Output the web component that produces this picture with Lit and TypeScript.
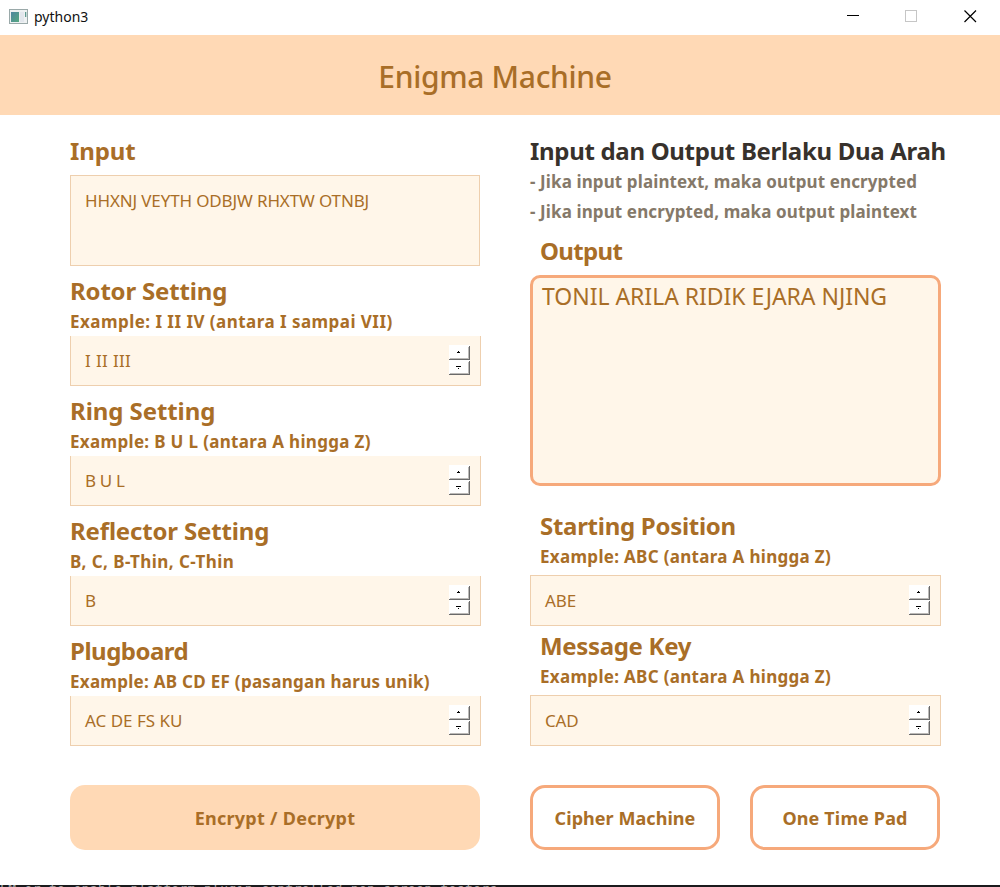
import { LitElement, html, css, svg } from "lit";
import { customElement, property } from "lit/decorators.js";
import { classMap } from "lit/directives/class-map.js";

/** Stacked pair of classic bevelled scroll buttons. */
@customElement("spin-buttons")
class SpinButtons extends LitElement {
  static styles = css`
    :host { display: block; width: 21px; height: 30px; margin-bottom: 2px; }
    svg { display: block; }
  `;

  private key(y: number, arrow: unknown) {
    return svg`<g transform="translate(0 ${y})">
      <rect width="21" height="15" fill="#fff"/>
      <path d="M0 14.5H21M20.5 1V15" stroke="#6a6a6a" fill="none"/>
      <path d="M1 13.5H20M19.5 2V14" stroke="#bcbab7" fill="none"/>
      ${arrow}
    </g>`;
  }

  render() {
    return html`<svg width="21" height="30" viewBox="0 0 21 30" shape-rendering="crispEdges">
      ${this.key(0, svg`<path d="M9 6h1v1h1v1h-3v-1h1z" fill="#000"/>`)}
      ${this.key(15, svg`<path d="M7 6h5v1h-5zM9 8h1v1h-1z" fill="#000"/>`)}
    </svg>`;
  }
}

/** Titled single-line setting with a hint and scroll buttons. */
@customElement("setting-field")
class SettingField extends LitElement {
  @property() heading = "";
  @property() hint = "";
  @property() value = "";
  @property({ type: Number }) headingTracking = 0;
  @property({ type: Number }) hintTracking = 0;
  @property({ type: Number }) valueTracking = 0;
  @property({ type: Boolean }) framed = false;

  static styles = css`
    :host { display: block; width: 411px; color: #a96e27; white-space: nowrap; }
    .heading { height: 30px; font: 700 24px/30px "Noto Sans", sans-serif; }
    .hint { height: 30px; font: 700 17px/32px "Noto Sans", sans-serif; }
    .framed-label { padding: 0 0 4px 10px; }
    .box {
      box-sizing: border-box; height: 50px; padding: 0 10px 0 14px;
      display: flex; align-items: center; justify-content: space-between;
      background: #fff6e9; border: 1px solid #eecfae; border-top: 0;
      font: 17px/24px "Noto Sans", sans-serif;
    }
    .framed { height: 51px; border-top: 1px solid #eecfae; }
  `;

  render() {
    return html`
      <div class=${classMap({ "framed-label": this.framed })}>
        <div class="heading" style="letter-spacing:${this.headingTracking}px">${this.heading}</div>
        <div class="hint" style="letter-spacing:${this.hintTracking}px">${this.hint}</div>
      </div>
      <div class=${classMap({ box: true, framed: this.framed })}>
        <span style="letter-spacing:${this.valueTracking}px">${this.value}</span>
        <spin-buttons></spin-buttons>
      </div>`;
  }
}

interface Setting {
  heading: string; hint: string; value: string;
  tracking: [number, number, number];
}

const ROTORS: Setting[] = [
  { heading: "Rotor Setting", hint: "Example: I II IV (antara I sampai VII)", value: "I II III", tracking: [-0.18, 0.46, 0.35] },
  { heading: "Ring Setting", hint: "Example: B U L (antara A hingga Z)", value: "B U L", tracking: [-0.08, 0.33, -0.3] },
  { heading: "Reflector Setting", hint: "B, C, B-Thin, C-Thin", value: "B", tracking: [-0.16, 0.43, 0] },
  { heading: "Plugboard", hint: "Example: AB CD EF (pasangan harus unik)", value: "AC DE FS KU", tracking: [-0.5, 0.28, 0] },
];

const KEYS: Setting[] = [
  { heading: "Starting Position", hint: "Example: ABC (antara A hingga Z)", value: "ABE", tracking: [-0.28, 0.31, -0.1] },
  { heading: "Message Key", hint: "Example: ABC (antara A hingga Z)", value: "CAD", tracking: [-0.33, 0.31, -0.2] },
];

@customElement("app-root")
class AppRoot extends LitElement {
  static styles = css`
    :host {
      display: flex; flex-direction: column; width: 1000px; height: 887px; overflow: hidden;
      background: #fff; color: #a96e27; font-family: "Noto Sans", sans-serif; white-space: nowrap;
    }
    .titlebar {
      height: 35px; flex: none; box-sizing: border-box; padding: 0 23px 0 9px;
      display: flex; align-items: center; color: #111;
    }
    .name { margin: 0 0 2px 6px; flex: 1; font-size: 14px; line-height: 20px; }
    .icon { display: block; margin-bottom: 3px; }
    .controls { display: flex; gap: 45px; margin-bottom: 2px; }
    .controls svg { display: block; }
    .close { margin-left: 1px; }
    .banner {
      height: 80px; flex: none; box-sizing: border-box; padding: 3px 10px 0 0;
      display: flex; align-items: center; justify-content: center;
      background: #ffd9b5; font-size: 30px; font-weight: 500; line-height: 44px; letter-spacing: -.33px;
    }
    .body { flex: 1; display: grid; grid-template-columns: 411px 416px; column-gap: 49px; padding: 21px 0 0 70px; align-content: start; }
    .column { display: flex; flex-direction: column; }
    .heading { height: 30px; font-size: 24px; font-weight: 700; line-height: 30px; letter-spacing: -.1px; }
    .notice { color: #37312c; letter-spacing: -.31px; }
    .note { height: 30px; font-size: 17px; font-weight: 700; line-height: 32px; color: #857969; letter-spacing: .11px; }
    .output-heading { margin-top: 10px; padding-left: 10px; letter-spacing: -.65px; }
    .input {
      box-sizing: border-box; width: 410px; height: 91px; margin: 9px 0 10px; padding: 15px 14px;
      background: #fff6e9; border: 1px solid #eecfae; font-size: 17px; line-height: 20px; letter-spacing: -.14px;
    }
    .output {
      box-sizing: border-box; width: 411px; height: 211px; margin: 9px 0 25px; padding: 3px 9px;
      background: #fff6e9; border: 3px solid #f6a97b; border-radius: 10px; font-size: 23px; line-height: 30px;
      letter-spacing: -.03px;
    }
    .settings { display: flex; flex-direction: column; gap: 10px; }
    .keys { display: flex; flex-direction: column; gap: 5px; }
    .actions { display: flex; margin-top: 39px; }
    .button {
      box-sizing: border-box; height: 65px; width: 190px; flex: none; padding: 0; margin: 0 30px 0 0;
      border: 3px solid #f6a97b; border-radius: 15px; background: #fff; color: inherit;
      font: 700 18px/30px "Noto Sans", sans-serif; letter-spacing: .05px; text-align: center;
    }
    .pad { margin: 0; letter-spacing: .15px; }
    .primary { width: 410px; margin: 0; border: 0; background: #ffd9b5; letter-spacing: .27px; }
    .terminal {
      height: 2px; flex: none; overflow: hidden; background: #1b1b1d; color: #a8a8a8;
      font: 13px/13px "DejaVu Sans Mono", monospace; letter-spacing: .33px;
    }
    .line { display: block; margin-top: -3px; }
  `;

  private setting(s: Setting, framed = false) {
    return html`<setting-field
      .heading=${s.heading} .hint=${s.hint} .value=${s.value} .framed=${framed}
      .headingTracking=${s.tracking[0]} .hintTracking=${s.tracking[1]} .valueTracking=${s.tracking[2]}
    ></setting-field>`;
  }

  render() {
    return html`
      <div class="titlebar">
        <svg class="icon" width="19" height="15" viewBox="0 0 19 15">
          <defs><linearGradient id="pane" x2="1" y2="1"><stop stop-color="#4f86a0"/><stop offset="1" stop-color="#56a880"/></linearGradient></defs>
          <rect x=".5" y=".5" width="18" height="14" fill="#eef1f2" stroke="#9aa9a9"/>
          <rect x="2" y="3" width="8" height="10" fill="url(#pane)"/>
          <rect x="11" y="3" width="4" height="10" fill="#e2e6ec"/>
          <rect x="16" y="3" width="1.3" height="5" fill="#5f9a90"/>
        </svg>
        <span class="name">python3</span>
        <div class="controls">
          <svg width="13" height="13" viewBox="0 0 13 13"><path d="M0 5.5H12" stroke="#000"/></svg>
          <svg width="13" height="13" viewBox="0 0 13 13"><rect x=".5" y=".5" width="11" height="11" fill="none" stroke="#c6c6c6"/></svg>
          <svg class="close" width="13" height="13" viewBox="0 0 13 13"><path d="M.5 .5L12 12M12 .5L.5 12" stroke="#000" stroke-width="1.2"/></svg>
        </div>
      </div>
      <div class="banner">Enigma Machine</div>
      <div class="body">
        <div class="column">
          <div class="heading">Input</div>
          <div class="input">HHXNJ VEYTH ODBJW RHXTW OTNBJ</div>
          <div class="settings">${ROTORS.map((s) => this.setting(s))}</div>
          <div class="actions"><button class="button primary">Encrypt / Decrypt</button></div>
        </div>
        <div class="column">
          <div class="heading notice">Input dan Output Berlaku Dua Arah</div>
          <div class="note">- Jika input plaintext, maka output encrypted</div>
          <div class="note">- Jika input encrypted, maka output plaintext</div>
          <div class="heading output-heading">Output</div>
          <div class="output">TONIL ARILA RIDIK EJARA NJING</div>
          <div class="keys">${KEYS.map((s) => this.setting(s, true))}</div>
          <div class="actions">
            <button class="button">Cipher Machine</button>
            <button class="button pad">One Time Pad</button>
          </div>
        </div>
      </div>
      <div class="terminal"><span class="line">LM or to enable platform plugin controlled non screen testers</span></div>
    `;
  }
}
